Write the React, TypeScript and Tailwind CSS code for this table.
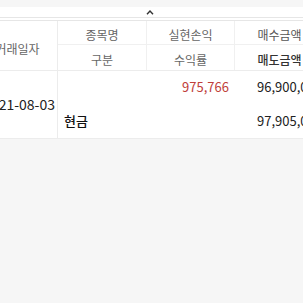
import type { ReactNode } from 'react';

const font = { fontFamily: '"Noto Sans CJK KR", "Noto Sans", sans-serif' };

function Cell({ children, className = '' }: { children?: ReactNode; className?: string }) {
  return <div className={`flex items-center ${className}`}>{children}</div>;
}

export default function App() {
  return (
    <div className="w-[303px] h-[303px] bg-[#f6f6f6] overflow-hidden" style={font}>
      {/* pull-down handle */}
      <div className="mt-[7px] h-[11px] bg-white border-b border-[#e6e6e6] flex justify-center pt-[3px]">
        <svg width="8" height="5" viewBox="0 0 8 5" className="ml-[-3px]">
          <path d="M1 4.2 L4 1 L7 4.2" fill="none" stroke="#333" strokeWidth="1.4" />
        </svg>
      </div>
      <div className="h-[2px] bg-white" />

      <div className="ml-[-24px] w-[348px] bg-white border-t border-[#e6e6e6]">
        {/* header */}
        <div className="grid grid-cols-[82px_89px_88px_89px] grid-rows-[24px_25px] text-[12px] text-[#666] border-b border-[#ececec]">
          <Cell className="row-span-2 justify-center border-r border-[#ececec] pl-[2px] pt-[6px]">거래일자</Cell>
          <Cell className="justify-center border-r border-b border-[#f0f0f0] pt-[4px]">종목명</Cell>
          <Cell className="justify-center border-r border-b border-[#f0f0f0] pt-[4px]">실현손익</Cell>
          <Cell className="justify-center border-b border-[#f0f0f0] text-[#555] pt-[4px]">매수금액</Cell>
          <Cell className="justify-center border-r border-[#f0f0f0] pt-[5px]">구분</Cell>
          <Cell className="justify-center border-r border-[#f0f0f0] pt-[5px]">수익률</Cell>
          <Cell className="justify-center text-[#333] font-medium pt-[5px]">매도금액</Cell>
        </div>

        {/* trade row */}
        <div className="grid grid-cols-[82px_89px_88px_89px] grid-rows-[32px_35px] text-[13px] text-[#222] border-b border-[#ececec]">
          <Cell className="row-span-2 justify-end pr-[2px] border-r border-[#ececec] text-[14px] whitespace-nowrap">2021-08-03</Cell>
          <Cell />
          <Cell className="justify-end pr-[6px] text-[#c0403a]">975,766</Cell>
          <Cell className="justify-end pr-[2px]">96,900,000</Cell>
          <Cell className="pl-[6px] font-medium text-[#111]">현금</Cell>
          <Cell />
          <Cell className="justify-end pr-[2px]">97,905,000</Cell>
        </div>
      </div>
    </div>
  );
}
